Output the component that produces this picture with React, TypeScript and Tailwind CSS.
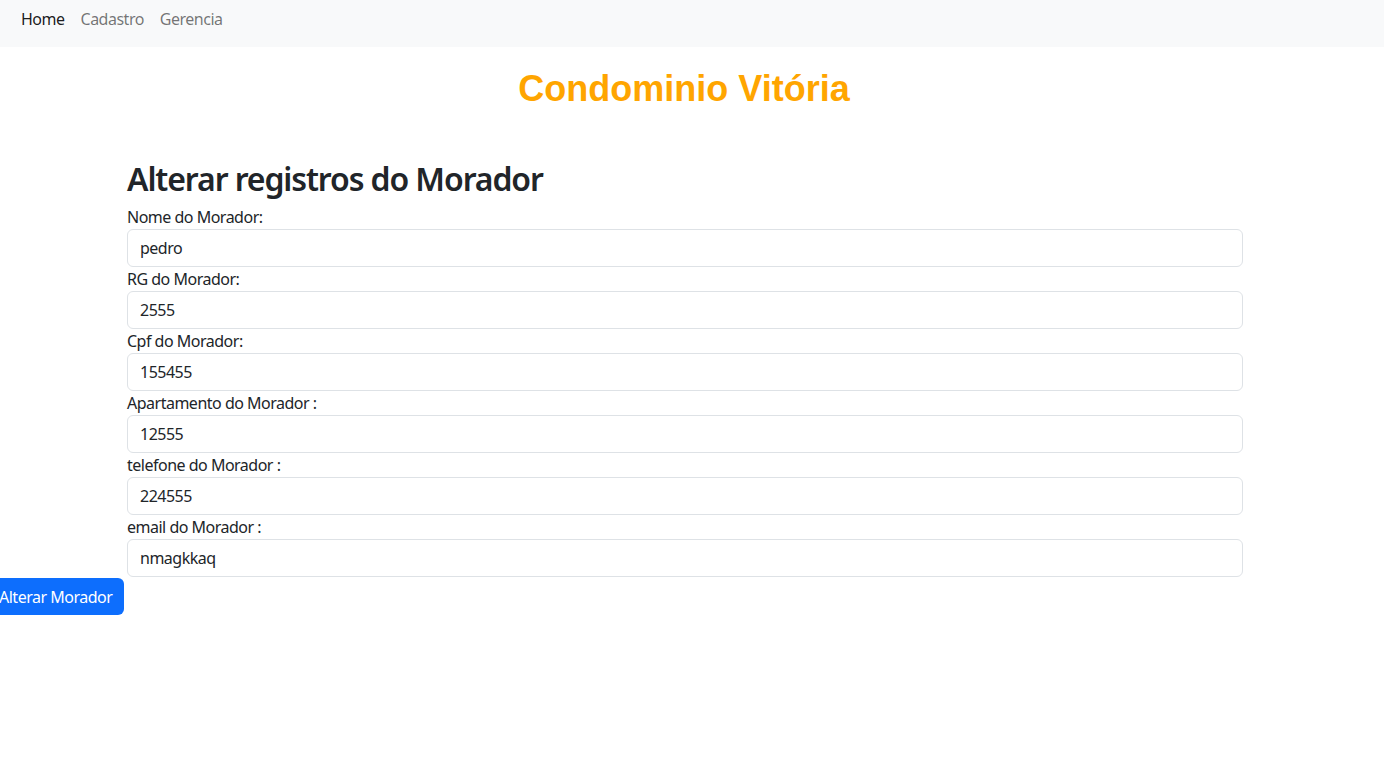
export default function App() {
  const fields = [
    { label: 'Nome do Morador:', value: 'pedro' },
    { label: 'RG do Morador:', value: '2555' },
    { label: 'Cpf do Morador:', value: '155455' },
    { label: 'Apartamento do Morador :', value: '12555' },
    { label: 'telefone do Morador :', value: '224555' },
    { label: 'email do Morador :', value: 'nmagkkaq' },
  ];

  return (
    <div className="min-h-[773px] bg-white font-['Noto_Sans',sans-serif] text-[16px] tracking-[-0.5px] text-[#212529]">
      <nav className="flex h-[47px] items-start bg-[#f8f9fa] px-[13px] pt-[7px]">
        <a className="px-[8px] leading-[24px] text-black/90">Home</a>
        <a className="px-[8px] leading-[24px] text-black/55">Cadastro</a>
        <a className="px-[8px] leading-[24px] text-black/55">Gerencia</a>
      </nav>

      <h1 className="mt-[21px] pr-[16px] text-center font-['Liberation_Sans',Arial,sans-serif] text-[36px] font-bold leading-[42px] tracking-normal text-[#ffa500]">
        Condominio Vitória
      </h1>

      <form className="ml-[127px] mt-[50px] w-[1116px]">
        <h2 className="text-[32px] font-semibold leading-[38px] tracking-[-1.1px]">Alterar registros do Morador</h2>
        <div className="mt-[7px]">
          {fields.map((f) => (
            <div key={f.label}>
              <label className="block leading-[24px]">{f.label}</label>
              <input
                readOnly
                value={f.value}
                className="block h-[38px] w-full rounded-[6px] border border-[#dee2e6] bg-white px-[12px] leading-[24px] text-[#212529] outline-none"
              />
            </div>
          ))}
        </div>
      </form>

      <button className="mt-px ml-[-13px] h-[37px] rounded-[6px] bg-[#0d6efd] px-[12px] leading-[24px] text-white">
        Alterar Morador
      </button>
    </div>
  );
}
